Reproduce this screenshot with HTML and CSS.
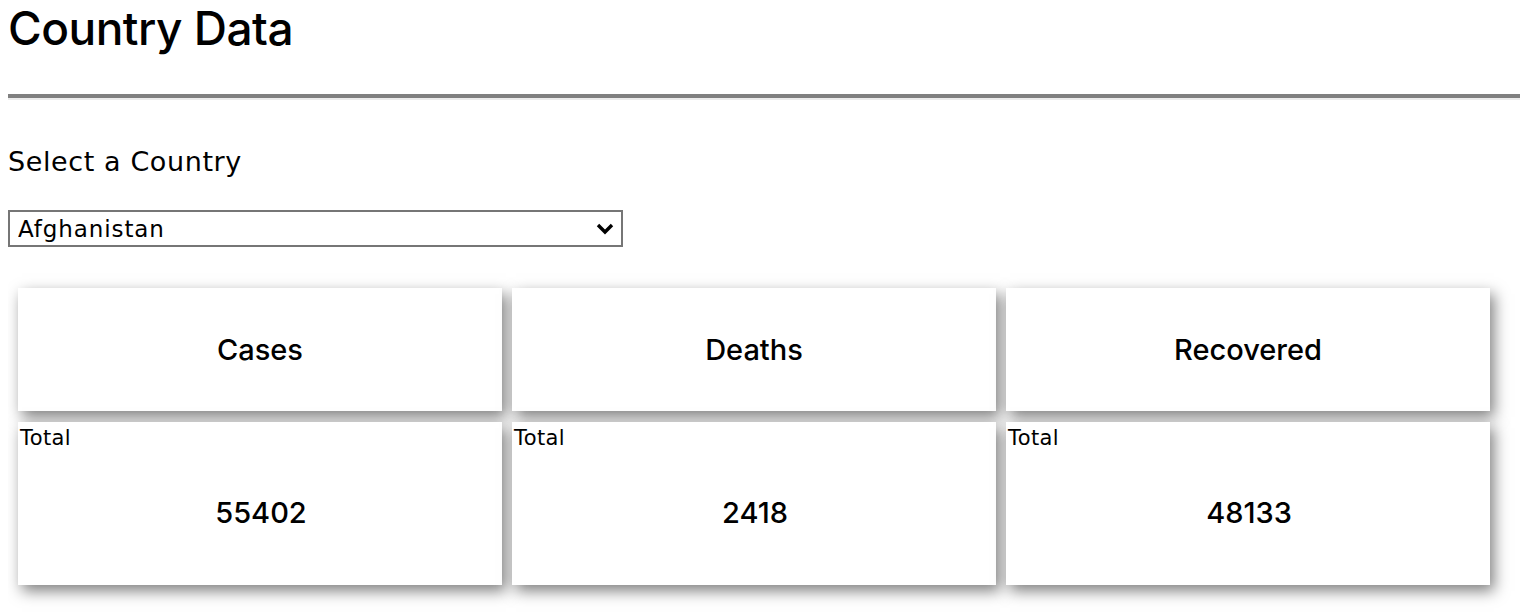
FILE: index.html
```html
<!DOCTYPE html>
<html>
<head>
<meta charset="utf-8">
<link rel="stylesheet" href="styles.css">
</head>
<body>
<h1 class="title">Country Data</h1>
<hr class="rule">
<h2 class="label">Select a Country</h2>
<div class="select-wrap">
  <select class="country-select">
    <option>Afghanistan</option>
    <option>Albania</option>
    <option>Algeria</option>
  </select>
  <svg class="chev" width="18" height="12" viewBox="0 0 18 12"><path d="M2 2 L9 9 L16 2" fill="none" stroke="#000" stroke-width="3.4"/></svg>
</div>
<div class="cards">
  <div class="card head">Cases</div>
  <div class="card head">Deaths</div>
  <div class="card head">Recovered</div>
  <div class="card stat"><span class="sub">Total</span><span class="num">55402</span></div>
  <div class="card stat"><span class="sub">Total</span><span class="num">2418</span></div>
  <div class="card stat"><span class="sub">Total</span><span class="num">48133</span></div>
</div>
</body>
</html>
```
FILE: styles.css
```css
html, body { background: #fff; }
body {
  margin: 8px 0 0 8px;
  font-family: "DejaVu Sans", "Open Sans", sans-serif;
  color: #000;
}
.title {
  font-family: Inter, sans-serif;
  font-weight: 500;
  font-size: 46px;
  line-height: 40px;
  margin: 0;
  letter-spacing: -0.5px;
}
.rule {
  margin: 46px 0 0 0;
  height: 0;
  border: 0;
  border-top: 4px solid #808080;
  border-bottom: 2px solid #ececec;
}
.label {
  font-weight: 400;
  font-size: 27px;
  line-height: 30px;
  letter-spacing: 0.6px;
  margin: 47px 0 0 0;
}
.select-wrap {
  position: relative;
  width: 615px;
  margin-top: 33px;
}
.country-select {
  appearance: none;
  -webkit-appearance: none;
  width: 615px;
  height: 37px;
  border: 2px solid #767676;
  border-radius: 0;
  background: #fff;
  font-family: "DejaVu Sans", sans-serif;
  font-size: 23px;
  letter-spacing: 0.9px;
  padding: 0 0 0 8px;
  color: #000;
  display: block;
}
.chev {
  position: absolute;
  right: 9px;
  top: 13px;
  pointer-events: none;
}
.cards {
  display: grid;
  grid-template-columns: repeat(3, 484px);
  grid-template-rows: 123px 163px;
  gap: 11px 10px;
  margin-top: 41px;
  padding: 0 0 40px 10px;
}
.card {
  background: #fff;
  box-shadow: 4px 6px 14px rgba(0,0,0,0.5);
}
.head {
  display: flex;
  align-items: center;
  justify-content: center;
  font-family: Inter, sans-serif;
  font-weight: 500;
  font-size: 29px;
}
.stat {
  display: flex;
  flex-direction: column;
  padding: 2px 0 0 2px;
}
.sub {
  font-size: 21px;
  line-height: 28px;
  letter-spacing: 0.4px;
}
.num {
  font-family: Inter, sans-serif;
  font-weight: 500;
  font-size: 29px;
  text-align: center;
  margin-top: 43px;
}
```
